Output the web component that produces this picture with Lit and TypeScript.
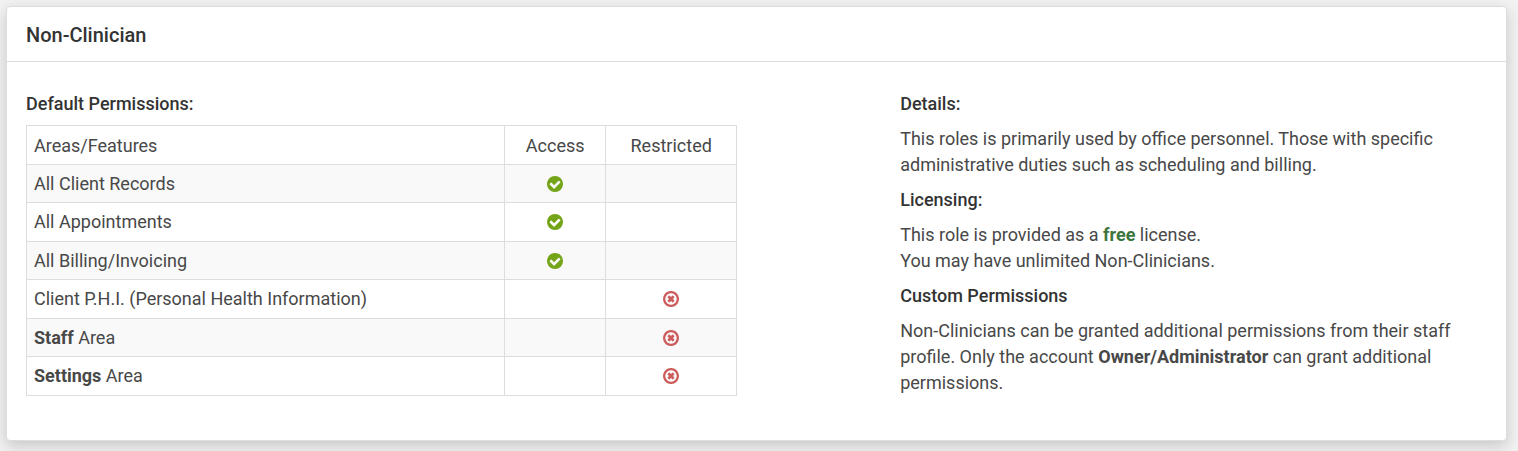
import { LitElement, html, css, svg } from "lit";
import { customElement } from "lit/decorators.js";

type Row = { strong?: string; label: string; access: boolean };

const rows: Row[] = [
  { label: "All Client Records", access: true },
  { label: "All Appointments", access: true },
  { label: "All Billing/Invoicing", access: true },
  { label: "Client P.H.I. (Personal Health Information)", access: false },
  { strong: "Staff", label: " Area", access: false },
  { strong: "Settings", label: " Area", access: false },
];

// Font Awesome 4 glyphs on a 1536-unit grid, y axis pointing up.
const checkCircle = html`<svg class="icon ok" viewBox="0 0 1536 1536" role="img" aria-label="Access">
  ${svg`<path transform="matrix(1 0 0 -1 0 1408)" d="M1284 802q0 28 -18 46l-91 90q-19 19 -45 19t-45 -19l-408 -407l-226 226q-19 19 -45 19t-45 -19l-91 -90q-18 -18 -18 -46q0 -27 18 -45l362 -362q19 -19 45 -19q27 0 46 19l543 543q18 18 18 45zM1536 640q0 -209 -103 -385.500t-279.500 -279.500t-385.500 -103t-385.500 103t-279.500 279.500t-103 385.500t103 385.500t279.500 279.500t385.500 103t385.500 -103t279.500 -279.500t103 -385.500z"/>`}
</svg>`;

const timesCircle = html`<svg class="icon no" viewBox="0 0 1536 1536" role="img" aria-label="Restricted">
  ${svg`<path transform="matrix(1 0 0 -1 0 1408)" d="M1097 457l-146 -146q-10 -10 -23 -10t-23 10l-137 137l-137 -137q-10 -10 -23 -10t-23 10l-146 146q-10 10 -10 23t10 23l137 137l-137 137q-10 10 -10 23t10 23l146 146q10 10 23 10t23 -10l137 -137l137 137q10 10 23 10t23 -10l146 -146q10 -10 10 -23t-10 -23l-137 -137l137 -137q10 -10 10 -23t-10 -23zM1312 640q0 148 -73 273t-198 198t-273 73t-273 -73t-198 -198t-73 -273t73 -273t198 -198t273 -73t273 73t198 198t73 273zM1536 640q0 -209 -103 -385.500t-279.500 -279.500t-385.500 -103t-385.500 103t-279.500 279.500t-103 385.500t103 385.500t279.500 279.500t385.500 103t385.500 -103t279.500 -279.500t103 -385.500z"/>`}
</svg>`;

@customElement("app-root")
export class AppRoot extends LitElement {
  static styles = css`
    :host {
      display: block;
      box-sizing: border-box;
      min-height: 100vh;
      padding: 6px 11px 10px 6px;
      background: #f2f2f2;
      color: #484848;
      font: 18px/26px Roboto, sans-serif;
    }
    .card {
      background: #fff;
      border: 1px solid #ddd;
      border-radius: 4px;
      box-shadow: 0 5px 15px rgba(0, 0, 0, 0.18);
    }
    header {
      padding: 15px 19px 12px;
      border-bottom: 1px solid #ddd;
    }
    h1, h2 {
      margin: 0;
      color: #333;
      font-weight: 500;
    }
    h1 {
      font-size: 20px;
      line-height: 27px;
    }
    h2 {
      font-size: 18px;
      line-height: 26px;
    }
    .body {
      display: grid;
      grid-template-columns: 3fr 2fr;
      padding: 29px 23px 35px 19px;
    }
    .permissions {
      padding-right: 163px;
    }
    table {
      width: 100%;
      margin-top: 8px;
      border-collapse: collapse;
      table-layout: fixed;
    }
    th, td {
      box-sizing: border-box;
      border: 1px solid #ddd;
      padding: 6px 7px;
      text-align: center;
      font-weight: 400;
    }
    th:first-child {
      text-align: left;
    }
    thead th {
      padding: 7px 7px 5px;
    }
    tbody tr:nth-child(odd) {
      background: #f9f9f9;
    }
    tbody tr:nth-child(odd) > * {
      padding-bottom: 5px;
    }
    .access {
      width: 101px;
    }
    .restricted {
      width: 131px;
    }
    .icon {
      display: inline-block;
      width: 16px;
      height: 16px;
      vertical-align: -2px;
      fill: currentColor;
    }
    .ok {
      color: #74a518;
    }
    .no {
      color: #cd5c5c;
    }
    p {
      margin: 9px 0;
    }
    strong {
      font-weight: 700;
    }
    .free {
      color: #3c763d;
    }
  `;

  render() {
    return html`
      <main class="card">
        <header><h1>Non-Clinician</h1></header>
        <div class="body">
          <section class="permissions">
            <h2 id="permissions">Default Permissions:</h2>
            <table aria-labelledby="permissions">
              <colgroup><col /><col class="access" /><col class="restricted" /></colgroup>
              <thead>
                <tr>
                  <th scope="col">Areas/Features</th>
                  <th scope="col">Access</th>
                  <th scope="col">Restricted</th>
                </tr>
              </thead>
              <tbody>
                ${rows.map(
                  (row) => html`<tr>
                    <th scope="row">${row.strong ? html`<strong>${row.strong}</strong>` : ""}${row.label}</th>
                    <td>${row.access ? checkCircle : ""}</td>
                    <td>${row.access ? "" : timesCircle}</td>
                  </tr>`
                )}
              </tbody>
            </table>
          </section>
          <section>
            <h2>Details:</h2>
            <p>
              This roles is primarily used by office personnel. Those with specific administrative duties such as
              scheduling and billing.
            </p>
            <h2>Licensing:</h2>
            <p>
              This role is provided as a <strong class="free">free</strong> license.<br />
              You may have unlimited Non-Clinicians.
            </p>
            <h2>Custom Permissions</h2>
            <p>
              Non-Clinicians can be granted additional permissions from their staff profile. Only the account
              <strong>Owner/Administrator</strong> can grant additional permissions.
            </p>
          </section>
        </div>
      </main>
    `;
  }
}
